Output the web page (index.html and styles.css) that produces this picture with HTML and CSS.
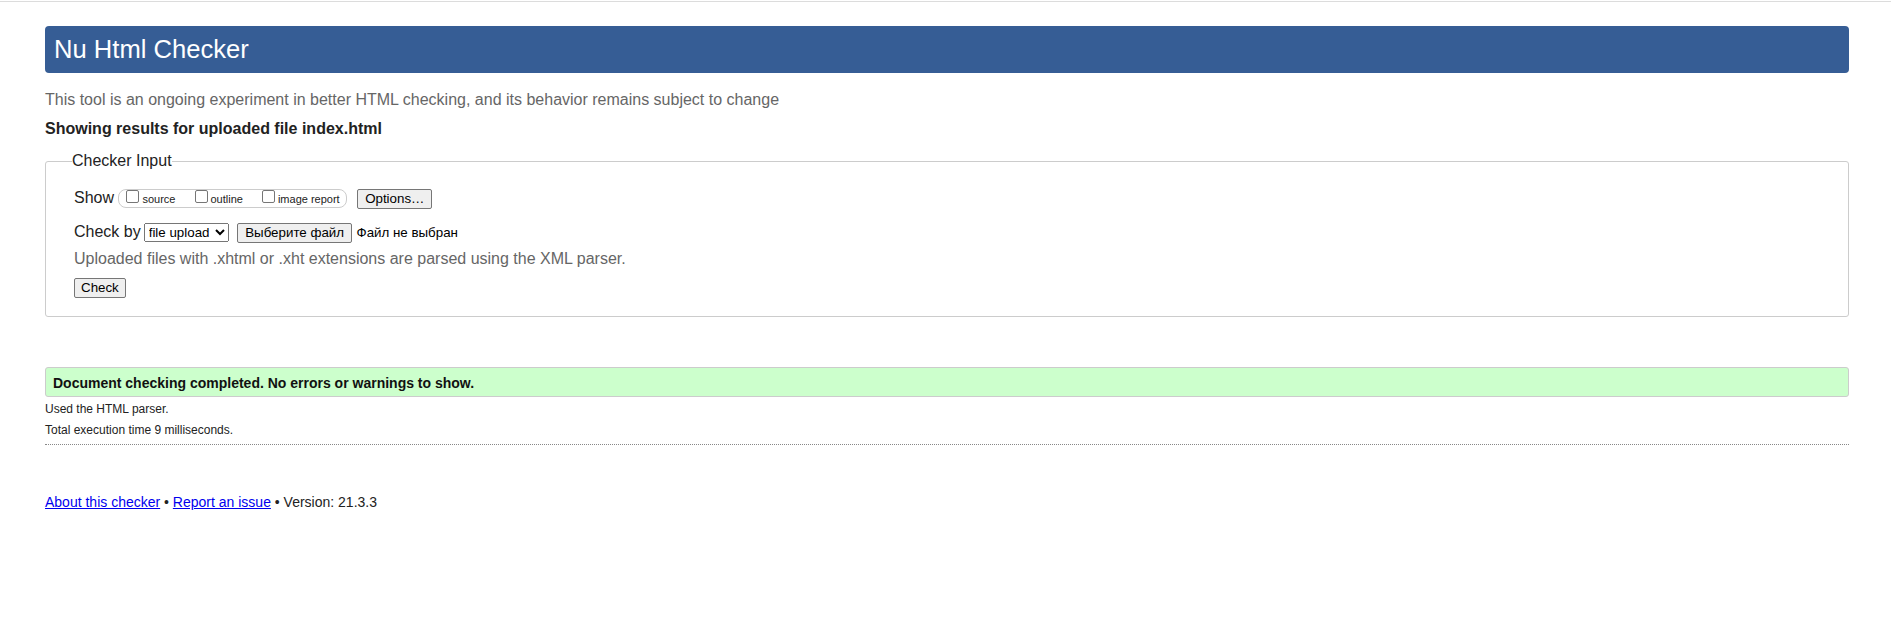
FILE: index.html
```html
<!DOCTYPE html>
<html lang="en">
<head>
<meta charset="utf-8">
<title>Showing results for uploaded file index.html - Nu Html Checker</title>
<link rel="stylesheet" href="styles.css">
</head>
<body>
<h1 class="title">Nu Html Checker</h1>
<p class="intro">This tool is an ongoing experiment in better HTML checking, and its behavior remains subject to change</p>
<p class="showing">Showing results for uploaded file index.html</p>

<form class="checker">
  <fieldset class="input-set">
    <legend class="legend">Checker Input</legend>
    <div class="row row-show">Show <span class="opts"><label class="opt"><input type="checkbox" class="cb">source</label><label class="opt"><input type="checkbox" class="cb">outline</label><label class="opt opt-last"><input type="checkbox" class="cb">image report</label></span> <button type="button" class="btn btn-options">Options…</button></div>
    <div class="row row-check">Check by<select class="sel"><option>file upload</option></select> <button type="button" class="btn btn-file">Выберите файл</button> <span class="nofile">Файл не выбран</span></div>
    <div class="row row-note">Uploaded files with .xhtml or .xht extensions are parsed using the XML parser.</div>
    <div class="row row-submit"><button type="button" class="btn btn-check">Check</button></div>
  </fieldset>
</form>

<p class="success">Document checking completed. No errors or warnings to show.</p>
<p class="meta">Used the HTML parser.</p>
<p class="meta meta-time">Total execution time 9 milliseconds.</p>
<hr class="sep">

<p class="footer"><a href="#about" class="link">About this checker</a> • <a href="#issue" class="link">Report an issue</a> • Version: 21.3.3</p>
</body>
</html>
```

FILE: styles.css
```css
html {
  padding-top: 1px;
  background: #fff;
}
body {
  margin: 0;
  border-top: 1px solid #dcdcdc;
  padding: 0 42px 0 45px;
  font-family: "Liberation Sans", Arial, sans-serif;
  font-size: 16px;
  color: #222;
}
.title {
  margin: 24px 0 0;
  height: 47px;
  line-height: 47px;
  padding: 0 9px;
  background: #365d95;
  color: #fff;
  font-size: 25.6px;
  font-weight: normal;
  border-radius: 4px;
}
.intro {
  margin: 18px 0 0;
  color: #666;
}
.showing {
  margin: 11px 0 0;
  font-weight: bold;
}
.checker {
  margin: 14px 0 0;
}
.input-set {
  margin: 0;
  border: 1px solid #ccc;
  border-radius: 3px;
  padding: 19px 28px 18px;
  min-width: 0;
}
.legend {
  padding: 0;
  margin-left: -2px;
  font-size: 16px;
}
.row {
  line-height: normal;
}
.row-check {
  margin-top: 14px;
}
.row-note {
  margin-top: 7px;
  color: #666;
}
.row-submit {
  margin-top: 10px;
}
.opts {
  display: inline-block;
  font-size: 11px;
  line-height: 13px;
  padding: 0 6px 1px 3px;
  border: 1px solid #ccc;
  border-radius: 8px;
}
.opt {
  margin-right: 15px;
}
.opt-last {
  margin-right: 0;
}
.cb {
  appearance: none;
  -webkit-appearance: none;
  display: inline-block;
  width: 13px;
  height: 13px;
  margin: 0 3px 0 4px;
  border: 1px solid #767676;
  border-radius: 2px;
  background: #fff;
  vertical-align: baseline;
  box-sizing: border-box;
}
.btn {
  font-family: "Liberation Sans", Arial, sans-serif;
  font-size: 13.333px;
  line-height: 16px;
  padding: 1px 7px;
  margin: 0;
  border: 1px solid #767676;
  border-radius: 2px;
  background: #efefef;
  color: #000;
}
.btn-options {
  margin-left: 6px;
}
.btn-file {
  margin-left: 4px;
  padding: 1px 7px;
}
.btn-check {
  padding: 1px 6px;
}
.sel {
  font-family: "Liberation Sans", Arial, sans-serif;
  font-size: 13.333px;
  margin: 0 0 0 3px;
  width: 85px;
  height: 19px;
  color: #000;
}
.nofile {
  font-size: 13.333px;
  color: #000;
}
.success {
  margin: 50px 0 0;
  padding: 7px 7px 5px;
  background: #ccffcc;
  border: 1px solid #ccc;
  border-radius: 3px;
  font-size: 14px;
  font-weight: bold;
  line-height: normal;
  color: #111;
}
.meta {
  margin: 0;
  font-size: 12px;
  line-height: 20px;
}
.success + .meta {
  margin-top: 2px;
}
.meta-time {
  margin-top: 1px;
}
.sep {
  margin: 4px 0 0;
  border: 0;
  border-top: 1px dotted #888;
  height: 0;
}
.footer {
  margin: 49px 0 0;
  font-size: 14px;
}
.link {
  color: #0000ee;
}
```
